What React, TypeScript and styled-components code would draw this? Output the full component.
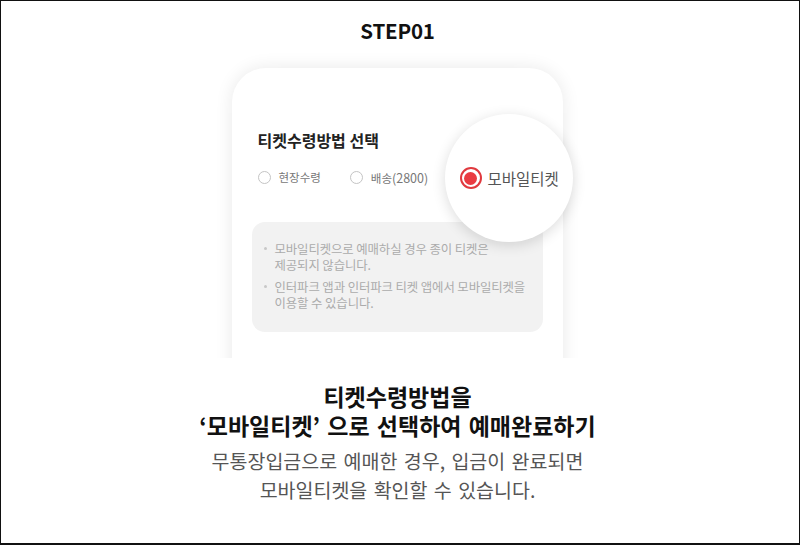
import React from "react"
import styled, { createGlobalStyle } from "styled-components"

const GlobalStyle = createGlobalStyle`
  * { box-sizing: border-box; }
  html, body {
    margin: 0;
    padding: 0;
    background: #fff;
  }
  body {
    font-family: "Noto Sans CJK KR", "Noto Sans", sans-serif;
  }
`

const Frame = styled.div`
  width: 800px;
  height: 545px;
  border: 1px solid #111;
  border-bottom-width: 2px;
  background: #fff;
  display: flex;
  flex-direction: column;
  align-items: center;
  padding-right: 5px;
  overflow: hidden;
`

const StepTitle = styled.h2`
  margin: 17px 0 0;
  font-size: 20.5px;
  line-height: 24px;
  font-weight: 700;
  color: #111;
  letter-spacing: -0.2px;
`

const PhoneViewport = styled.div`
  width: 380px;
  height: 315px;
  margin-top: 1px;
  padding: 25px 24px 0;
  overflow: hidden;
`

const PhoneCard = styled.div`
  position: relative;
  width: 331px;
  height: 420px;
  background: #fff;
  border-radius: 34px;
  box-shadow: 0 0 18px rgba(0, 0, 0, 0.09);
  padding: 61px 20px 0;
`

const SectionTitle = styled.h3`
  margin: 0 0 0 6px;
  font-size: 16px;
  line-height: 22px;
  font-weight: 700;
  color: #222;
`

const RadioRow = styled.div`
  display: flex;
  align-items: center;
  gap: 29px;
  margin: 15px 0 0 6px;
  height: 22px;
`

const RadioOption = styled.label`
  display: flex;
  align-items: center;
  gap: 8px;
  font-size: 11.5px;
  color: #777;
`

const Price = styled.span`
  font-size: 12.5px;
`

const RadioCircle = styled.span<{ $size: number; $checked?: boolean }>`
  width: ${(p) => p.$size}px;
  height: ${(p) => p.$size}px;
  border-radius: 50%;
  border: ${(p) => (p.$checked ? "2px solid #e0393e" : "1px solid #c4c4c4")};
  display: flex;
  align-items: center;
  justify-content: center;
  flex-shrink: 0;
  background: #fff;

  &::after {
    content: "";
    display: ${(p) => (p.$checked ? "block" : "none")};
    width: ${(p) => p.$size - 9}px;
    height: ${(p) => p.$size - 9}px;
    border-radius: 50%;
    background: #ea3b42;
  }
`

const Magnifier = styled.div`
  position: absolute;
  left: 213px;
  top: 46px;
  width: 128px;
  height: 128px;
  border-radius: 50%;
  background: #fff;
  box-shadow: 0 3px 14px rgba(0, 0, 0, 0.14);
  display: flex;
  align-items: center;
  padding-left: 15px;
  gap: 6px;
  font-size: 15.5px;
  color: #555;
`

const InfoBox = styled.ul`
  list-style: none;
  margin: 34px 0 0;
  padding: 19px 12px 21px 11px;
  background: #f2f2f2;
  border-radius: 13px;
  display: flex;
  flex-direction: column;
  gap: 6px;
`

const InfoItem = styled.li`
  position: relative;
  padding-left: 12px;
  font-size: 12.4px;
  line-height: 16px;
  color: #ababab;
  letter-spacing: -0.1px;
  white-space: nowrap;

  &::before {
    content: "";
    position: absolute;
    left: 1px;
    top: 6px;
    width: 3px;
    height: 3px;
    border-radius: 50%;
    background: #c8c8c8;
  }
`

const Heading = styled.h1`
  margin: 24px 0 0;
  font-size: 23px;
  line-height: 29px;
  font-weight: 700;
  color: #111;
  text-align: center;
  word-spacing: 2px;
`

const SubText = styled.p`
  margin: 6px 0 0;
  font-size: 19.5px;
  line-height: 29px;
  color: #555;
  text-align: center;
  word-spacing: 2px;
`

export default function App() {
  return (
    <>
      <GlobalStyle />
      <Frame>
        <StepTitle>STEP01</StepTitle>
        <PhoneViewport>
          <PhoneCard>
            <SectionTitle>티켓수령방법 선택</SectionTitle>
            <RadioRow>
              <RadioOption>
                <RadioCircle $size={13} />
                현장수령
              </RadioOption>
              <RadioOption>
                <RadioCircle $size={13} />
                <span>
                  배송<Price>(2800)</Price>
                </span>
              </RadioOption>
            </RadioRow>
            <InfoBox>
              <InfoItem>
                모바일티켓으로 예매하실 경우 종이 티켓은
                <br />
                제공되지 않습니다.
              </InfoItem>
              <InfoItem>
                인터파크 앱과 인터파크 티켓 앱에서 모바일티켓을
                <br />
                이용할 수 있습니다.
              </InfoItem>
            </InfoBox>
            <Magnifier>
              <RadioCircle $size={22} $checked />
              모바일티켓
            </Magnifier>
          </PhoneCard>
        </PhoneViewport>
        <Heading>
          티켓수령방법을
          <br />
          ‘모바일티켓’ 으로 선택하여 예매완료하기
        </Heading>
        <SubText>
          무통장입금으로 예매한 경우, 입금이 완료되면
          <br />
          모바일티켓을 확인할 수 있습니다.
        </SubText>
      </Frame>
    </>
  )
}
